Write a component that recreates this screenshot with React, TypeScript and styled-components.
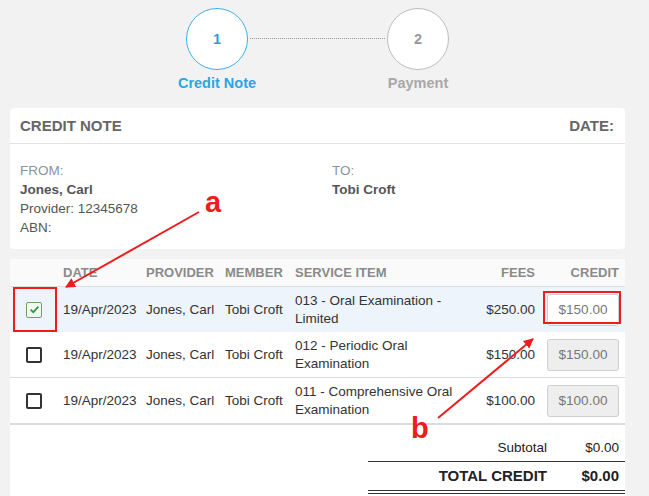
import React from "react";
import styled, { createGlobalStyle } from "styled-components";

const Global = createGlobalStyle`
  html, body { margin: 0; padding: 0; background: #f2f2f2; height: 496px; overflow: hidden; }
  body { font-family: "Liberation Sans", Arial, sans-serif; color: #333; }
`;

const Page = styled.div`
  position: relative;
  width: 649px;
  height: 496px;
  box-sizing: border-box;
  padding: 8px 24px 0 10px;
  overflow: hidden;
`;

const StepsRow = styled.div`
  display: flex;
  justify-content: center;
  align-items: flex-start;
  height: 100px;
`;

const Step = styled.div`
  width: 62px;
  display: flex;
  flex-direction: column;
  align-items: center;
`;

const Circle = styled.div<{ $active?: boolean }>`
  width: 62px;
  height: 62px;
  box-sizing: border-box;
  border-radius: 50%;
  background: #fff;
  border: 1.5px solid ${(p) => (p.$active ? "#3cb0e8" : "#bdbdbd")};
  color: ${(p) => (p.$active ? "#2a9fdc" : "#999")};
  display: flex;
  align-items: center;
  justify-content: center;
  font-weight: bold;
  font-size: 14.5px;
`;

const StepLabel = styled.div<{ $active?: boolean }>`
  margin-top: 5px;
  white-space: nowrap;
  font-weight: bold;
  font-size: 14.5px;
  color: ${(p) => (p.$active ? "#2aa6e3" : "#a8a8a8")};
`;

const Connector = styled.div`
  width: 135px;
  margin: 30px 2px 0;
  border-top: 1px dotted #9a9a9a;
`;

const Card = styled.section`
  background: #fff;
  border-radius: 4px;
`;

const CardHeader = styled.div`
  height: 35px;
  border-bottom: 1px solid #e3e3e3;
  padding: 0 11px 0 10px;
  display: flex;
  align-items: center;
  justify-content: space-between;
  font-weight: bold;
  font-size: 15px;
  color: #666;
`;

const CardBody = styled.div`
  display: grid;
  grid-template-columns: 312px 1fr;
  padding: 17px 10px 12px;
  font-size: 13.5px;
  line-height: 19px;
  color: #555;
`;

const Col = styled.div`
  display: flex;
  flex-direction: column;
`;

const Label = styled.div`
  color: #8b939c;
`;

const Strong = styled.div`
  font-weight: bold;
  color: #555;
`;

const TableCard = styled.section`
  margin-top: 10px;
  background: #fff;
  border-radius: 4px 4px 0 0;
  height: 240px;
`;

const Table = styled.table`
  width: 100%;
  table-layout: fixed;
  border-collapse: collapse;
  font-size: 13.5px;
  border-bottom: 2px solid #dcdcdc;
`;

const Th = styled.th<{ $right?: boolean }>`
  height: 27px;
  padding: 0 5px;
  text-align: ${(p) => (p.$right ? "right" : "left")};
  font-weight: bold;
  font-size: 13px;
  color: #8a8a8a;
  background: #fafafa;
  border-bottom: 1px solid #dedede;
  white-space: nowrap;
`;

const Tr = styled.tr<{ $selected?: boolean }>`
  background: ${(p) => (p.$selected ? "#edf4fc" : "#fff")};
  & + & td { border-top: 1px solid #dedede; }
`;

const Td = styled.td<{ $right?: boolean; $center?: boolean }>`
  height: 45px;
  padding: 0 5px;
  color: #333;
  line-height: 18px;
  text-align: ${(p) => (p.$right ? "right" : p.$center ? "center" : "left")};
  white-space: ${(p) => (p.$right ? "nowrap" : "normal")};
`;

const CreditTd = styled.td`
  height: 45px;
  padding: 0 6px;
`;

const CreditInput = styled.input`
  width: 72px;
  height: 32px;
  box-sizing: border-box;
  display: block;
  margin-left: auto;
  border: 1px solid #cfcfcf;
  border-radius: 3px;
  background: ${(p) => (p.disabled ? "#eeeeee" : "#fff")};
  color: #777;
  font-family: "Liberation Sans", Arial, sans-serif;
  font-size: 13.5px;
  text-align: center;
  padding: 0;
`;

const Check = styled.span<{ $checked?: boolean }>`
  display: inline-flex;
  align-items: center;
  justify-content: center;
  width: 16px;
  height: 16px;
  box-sizing: border-box;
  border: ${(p) => (p.$checked ? "1.5px solid #6f9f63" : "2px solid #333")};
  border-radius: 2px;
  background: ${(p) => (p.$checked ? "#f3f8ef" : "#fff")};
  vertical-align: middle;
`;

const Totals = styled.div`
  display: flex;
  justify-content: flex-end;
`;

const TotalsGrid = styled.div`
  width: 257px;
  display: grid;
  grid-template-columns: 1fr 78px;
`;

const TotalCell = styled.div<{ $bold?: boolean; $value?: boolean }>`
  text-align: right;
  padding-right: ${(p) => (p.$value ? "6px" : "0")};
  font-size: ${(p) => (p.$bold ? "15px" : "13.5px")};
  font-weight: ${(p) => (p.$bold ? "bold" : "normal")};
  color: #222;
  ${(p) =>
    p.$bold
      ? `line-height: 28px; border-bottom: 4px double #333;`
      : `padding-top: 14px; line-height: 18px; height: 37px; box-sizing: border-box; border-bottom: 1px solid #333;`}
`;

const Overlay = styled.svg`
  position: absolute;
  left: 0;
  top: 0;
  width: 649px;
  height: 496px;
  pointer-events: none;
`;

const Letter = styled.span<{ $x: number; $y: number }>`
  position: absolute;
  left: ${(p) => p.$x}px;
  top: ${(p) => p.$y}px;
  font-size: 29px;
  font-weight: bold;
  line-height: 1;
  color: #ee1c1c;
`;

const rows = [
  { item: "013 - Oral Examination - Limited", fee: "$250.00", credit: "$150.00", checked: true },
  { item: "012 - Periodic Oral Examination", fee: "$150.00", credit: "$150.00", checked: false },
  { item: "011 - Comprehensive Oral Examination", fee: "$100.00", credit: "$100.00", checked: false },
];

export default function App() {
  return (
    <>
      <Global />
      <Page>
        <StepsRow>
          <Step>
            <Circle $active>1</Circle>
            <StepLabel $active>Credit Note</StepLabel>
          </Step>
          <Connector />
          <Step>
            <Circle>2</Circle>
            <StepLabel>Payment</StepLabel>
          </Step>
        </StepsRow>

        <Card>
          <CardHeader>
            <span>CREDIT NOTE</span>
            <span>DATE:</span>
          </CardHeader>
          <CardBody>
            <Col>
              <Label>FROM:</Label>
              <Strong>Jones, Carl</Strong>
              <div>Provider: 12345678</div>
              <div>ABN:</div>
            </Col>
            <Col>
              <Label>TO:</Label>
              <Strong>Tobi Croft</Strong>
            </Col>
          </CardBody>
        </Card>

        <TableCard>
          <Table>
            <colgroup>
              <col style={{ width: 48 }} />
              <col style={{ width: 83 }} />
              <col style={{ width: 79 }} />
              <col style={{ width: 70 }} />
              <col style={{ width: 180 }} />
              <col style={{ width: 70 }} />
              <col style={{ width: 85 }} />
            </colgroup>
            <thead>
              <tr>
                <Th />
                <Th>DATE</Th>
                <Th>PROVIDER</Th>
                <Th>MEMBER</Th>
                <Th>SERVICE ITEM</Th>
                <Th $right>FEES</Th>
                <Th $right style={{ paddingRight: 6 }}>CREDIT</Th>
              </tr>
            </thead>
            <tbody>
              {rows.map((r, i) => (
                <Tr key={i} $selected={r.checked}>
                  <Td $center>
                    <Check $checked={r.checked}>
                      {r.checked && (
                        <svg width="11" height="11" viewBox="0 0 11 11">
                          <path d="M1.6 5.6 L4.3 8.2 L9.4 2.6" fill="none" stroke="#2f9552" strokeWidth="1.8" />
                        </svg>
                      )}
                    </Check>
                  </Td>
                  <Td>19/Apr/2023</Td>
                  <Td>Jones, Carl</Td>
                  <Td>Tobi Croft</Td>
                  <Td>{r.item}</Td>
                  <Td $right>{r.fee}</Td>
                  <CreditTd>
                    <CreditInput readOnly value={r.credit} disabled={!r.checked} />
                  </CreditTd>
                </Tr>
              ))}
            </tbody>
          </Table>
          <Totals>
            <TotalsGrid>
              <TotalCell>Subtotal</TotalCell>
              <TotalCell $value>$0.00</TotalCell>
              <TotalCell $bold>TOTAL CREDIT</TotalCell>
              <TotalCell $bold $value>$0.00</TotalCell>
            </TotalsGrid>
          </Totals>
        </TableCard>

        <Overlay viewBox="0 0 649 496">
          <defs>
            <marker id="ah" viewBox="0 0 10 10" refX="9" refY="5" markerWidth="5" markerHeight="5" orient="auto-start-reverse">
              <path d="M0 0 L10 5 L0 10 z" fill="#ee1c1c" />
            </marker>
          </defs>
          <rect x="14" y="288" width="42" height="43" fill="none" stroke="#ee1c1c" strokeWidth="2" />
          <rect x="544" y="292" width="76" height="31" fill="none" stroke="#ee1c1c" strokeWidth="2" />
          <line x1="199" y1="212" x2="66" y2="287" stroke="#ee1c1c" strokeWidth="2" markerEnd="url(#ah)" />
          <line x1="438" y1="418" x2="533" y2="339" stroke="#ee1c1c" strokeWidth="2" markerEnd="url(#ah)" />
        </Overlay>
        <Letter $x={205} $y={188}>a</Letter>
        <Letter $x={411} $y={414}>b</Letter>
      </Page>
    </>
  );
}
